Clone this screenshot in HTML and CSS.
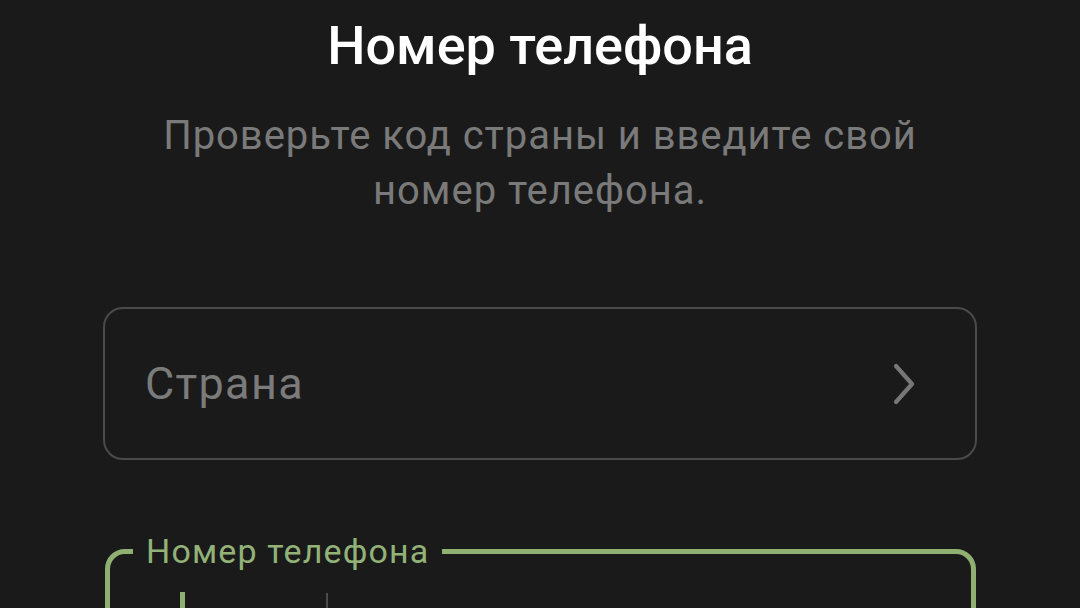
FILE: index.html
```html
<!DOCTYPE html>
<html lang="ru">
<head>
<meta charset="utf-8">
<title>Номер телефона</title>
<link rel="stylesheet" href="styles.css">
</head>
<body>
<main class="screen">
  <h1 class="title">Номер телефона</h1>
  <p class="subtitle">Проверьте код страны и введите свой номер телефона.</p>

  <div class="country-field">
    <span class="country-placeholder">Страна</span>
    <svg class="chevron" width="24" height="44" viewBox="0 0 24 44" aria-hidden="true">
      <polyline points="4,4 20,22 4,40" fill="none" stroke="#777777" stroke-width="4.2" stroke-linecap="round" stroke-linejoin="round"/>
    </svg>
  </div>

  <fieldset class="phone-field">
    <legend class="phone-label">Номер телефона</legend>
    <div class="phone-row">
      <div class="code-part"><span class="caret"></span></div>
      <span class="divider"></span>
      <div class="number-part"></div>
    </div>
  </fieldset>
</main>
</body>
</html>
```

FILE: styles.css
```css
html, body {
  margin: 0;
  padding: 0;
  background: #1a1a1a;
  height: 100%;
  overflow: hidden;
}

body {
  font-family: Roboto, "Noto Sans", "Liberation Sans", sans-serif;
}

.screen {
  padding: 14px 103px 0 103px;
}

.title {
  margin: 0;
  text-align: center;
  color: #ffffff;
  font-size: 54px;
  font-weight: 500;
  line-height: 64px;
}

.subtitle {
  margin: 30px auto 0;
  max-width: 820px;
  text-align: center;
  color: #7a7a7a;
  font-size: 40px;
  letter-spacing: 0.95px;
  line-height: 55px;
}

.country-field {
  margin-top: 89px;
  height: 149px;
  border: 2px solid #4a4a4a;
  border-radius: 20px;
  display: flex;
  align-items: center;
  justify-content: space-between;
  padding: 0 59px 0 40px;
}

.country-placeholder {
  color: #7b7b7b;
  font-size: 45px;
  letter-spacing: 1.3px;
  line-height: 52px;
}

.chevron {
  display: block;
}

.phone-field {
  margin: 71px 1px 0 2px;
  padding: 0;
  border: 5px solid #8fb070;
  border-radius: 20px;
  min-inline-size: 0;
}

.phone-label {
  margin-left: 23px;
  padding: 0 13px;
  color: #93b278;
  font-size: 34px;
  letter-spacing: 1.15px;
  line-height: 40px;
}

.phone-row {
  display: flex;
  align-items: flex-start;
  padding-top: 21px;
  height: 100px;
}

.code-part {
  width: 216px;
  padding-left: 70px;
  box-sizing: border-box;
}

.caret {
  display: block;
  width: 5px;
  height: 56px;
  background: #8fb070;
}

.divider {
  display: block;
  margin-top: 1px;
  width: 2px;
  height: 56px;
  background: #4a4a4a;
}

.number-part {
  flex: 1;
}
```
